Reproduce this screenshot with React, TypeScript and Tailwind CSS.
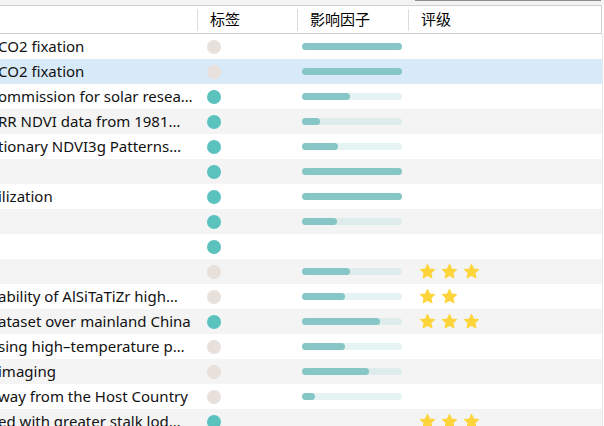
import React from "react";

interface PaperRow {
    id: number;
    title: string;
    tag: "teal" | "beige";
    factor: number | null;
    rating: number;
}

const rows: PaperRow[] = [
    { id: 1, title: "CO2 fixation", tag: "beige", factor: 100, rating: 0 },
    { id: 2, title: "CO2 fixation", tag: "beige", factor: 100, rating: 0 },
    { id: 3, title: "ommission for solar resea…", tag: "teal", factor: 48, rating: 0 },
    { id: 4, title: "RR NDVI data from 1981…", tag: "teal", factor: 18, rating: 0 },
    { id: 5, title: "tionary NDVI3g Patterns…", tag: "teal", factor: 36, rating: 0 },
    { id: 6, title: "", tag: "teal", factor: 100, rating: 0 },
    { id: 7, title: "ilization", tag: "teal", factor: 100, rating: 0 },
    { id: 8, title: "", tag: "teal", factor: 35, rating: 0 },
    { id: 9, title: "", tag: "teal", factor: null, rating: 0 },
    { id: 10, title: "", tag: "beige", factor: 48, rating: 3 },
    { id: 11, title: "ability of AlSiTaTiZr high…", tag: "beige", factor: 43, rating: 2 },
    { id: 12, title: "ataset over mainland China", tag: "teal", factor: 78, rating: 3 },
    { id: 13, title: "sing high–temperature p…", tag: "beige", factor: 43, rating: 0 },
    { id: 14, title: "imaging", tag: "beige", factor: 67, rating: 0 },
    { id: 15, title: "way from the Host Country", tag: "beige", factor: 13, rating: 0 },
    { id: 16, title: "ed with greater stalk lod…", tag: "teal", factor: null, rating: 3 },
];

const Star = () => (
    <svg width="17" height="17" viewBox="0 0 24 24">
        <path
            d="M12 2.2l2.9 6.3 6.9.8-5.1 4.7 1.4 6.8L12 17.4l-6.1 3.4 1.4-6.8-5.1-4.7 6.9-.8z"
            fill="#fdd43a"
            stroke="#fdd43a"
            strokeWidth="1.6"
            strokeLinejoin="round"
        />
    </svg>
);

const HeaderCell: React.FC<{ label: string; width: string }> = ({ label, width }) => (
    <div className={`flex items-center ${width}`}>
        <div className="w-px h-[22px] bg-[#dcdcdc]" />
        <span className="pl-[12px] text-[15px] text-black">{label}</span>
    </div>
);

const App: React.FC = () => {
    return (
        <div
            className="w-[604px] h-[426px] overflow-hidden bg-white"
            style={{ fontFamily: '"Noto Sans", "Noto Sans CJK SC", sans-serif' }}
        >
            <div className="h-[5px] bg-[#f3f3f3]">
                <div className="ml-[415px] w-[186px] h-px bg-[#8c8c8c]" />
            </div>
            <div className="flex">
                <div className="w-[602px]">
                    <div className="flex h-[29px] border-y border-r border-[#d0d0d0] bg-white">
                        <div className="w-[197px]" />
                        <HeaderCell label="标签" width="w-[100px]" />
                        <HeaderCell label="影响因子" width="w-[111px]" />
                        <HeaderCell label="评级" width="flex-1" />
                    </div>
                    {rows.map((row, i) => (
                        <div
                            key={row.id}
                            className={`flex items-center h-[25px] ${
                                i === 1 ? "bg-[#d8e9f7]" : i % 2 === 1 ? "bg-[#f4f4f4]" : "bg-white"
                            }`}
                        >
                            <div className="w-[197px] overflow-hidden pr-[4px]">
                                <div className="-ml-[2px] truncate text-[15px] leading-[25px] text-[#111]">
                                    {row.title}
                                </div>
                            </div>
                            <div className="w-[100px] pl-[10px]">
                                <div
                                    className={`w-[14px] h-[14px] rounded-full ${
                                        row.tag === "teal" ? "bg-[#5bc2be]" : "bg-[#e8e0db]"
                                    }`}
                                />
                            </div>
                            <div className="w-[111px] pl-[5px]">
                                {row.factor !== null && (
                                    <div className="w-[100px] h-[7px] rounded-full bg-[#bfe0e0]/40">
                                        <div
                                            className="h-[7px] rounded-full bg-[#87c6c6]"
                                            style={{ width: `${row.factor}%` }}
                                        />
                                    </div>
                                )}
                            </div>
                            <div className="flex-1 flex gap-[5px] pl-[11px]">
                                {Array.from({ length: row.rating }).map((_, k) => (
                                    <Star key={k} />
                                ))}
                            </div>
                        </div>
                    ))}
                </div>
                <div className="w-[2px] mt-[29px] border-l border-[#e6e6e6]" />
            </div>
        </div>
    );
};

export default App;
